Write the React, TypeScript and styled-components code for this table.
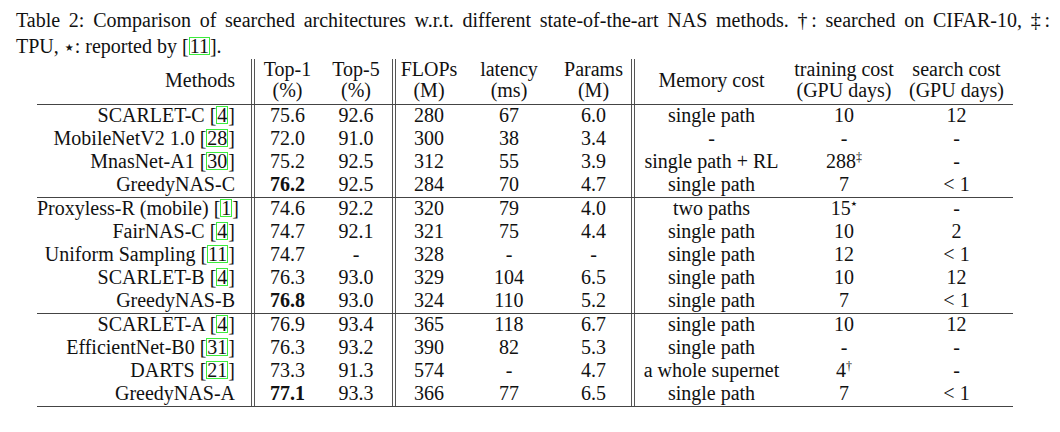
import React from "react";
import styled, { createGlobalStyle } from "styled-components";

type Row = {
  method: string;
  cite?: string;
  top1: string;
  bold?: boolean;
  top5: string;
  flops: string;
  latency: string;
  params: string;
  memory: string;
  train: string;
  mark?: string;
  search: string;
};

const groups: Row[][] = [
  [
    { method: "SCARLET-C", cite: "4", top1: "75.6", top5: "92.6", flops: "280", latency: "67", params: "6.0", memory: "single path", train: "10", search: "12" },
    { method: "MobileNetV2 1.0", cite: "28", top1: "72.0", top5: "91.0", flops: "300", latency: "38", params: "3.4", memory: "-", train: "-", search: "-" },
    { method: "MnasNet-A1", cite: "30", top1: "75.2", top5: "92.5", flops: "312", latency: "55", params: "3.9", memory: "single path + RL", train: "288", mark: "‡", search: "-" },
    { method: "GreedyNAS-C", top1: "76.2", bold: true, top5: "92.5", flops: "284", latency: "70", params: "4.7", memory: "single path", train: "7", search: "< 1" },
  ],
  [
    { method: "Proxyless-R (mobile)", cite: "1", top1: "74.6", top5: "92.2", flops: "320", latency: "79", params: "4.0", memory: "two paths", train: "15", mark: "★", search: "-" },
    { method: "FairNAS-C", cite: "4", top1: "74.7", top5: "92.1", flops: "321", latency: "75", params: "4.4", memory: "single path", train: "10", search: "2" },
    { method: "Uniform Sampling", cite: "11", top1: "74.7", top5: "-", flops: "328", latency: "-", params: "-", memory: "single path", train: "12", search: "< 1" },
    { method: "SCARLET-B", cite: "4", top1: "76.3", top5: "93.0", flops: "329", latency: "104", params: "6.5", memory: "single path", train: "10", search: "12" },
    { method: "GreedyNAS-B", top1: "76.8", bold: true, top5: "93.0", flops: "324", latency: "110", params: "5.2", memory: "single path", train: "7", search: "< 1" },
  ],
  [
    { method: "SCARLET-A", cite: "4", top1: "76.9", top5: "93.4", flops: "365", latency: "118", params: "6.7", memory: "single path", train: "10", search: "12" },
    { method: "EfficientNet-B0", cite: "31", top1: "76.3", top5: "93.2", flops: "390", latency: "82", params: "5.3", memory: "single path", train: "-", search: "-" },
    { method: "DARTS", cite: "21", top1: "73.3", top5: "91.3", flops: "574", latency: "-", params: "4.7", memory: "a whole supernet", train: "4", mark: "†", search: "-" },
    { method: "GreedyNAS-A", top1: "77.1", bold: true, top5: "93.3", flops: "366", latency: "77", params: "6.5", memory: "single path", train: "7", search: "< 1" },
  ],
];

// column widths include the double separator on the right
const widths = [218, 65, 76, 66, 94, 79, 153, 112, 113];

const GlobalStyle = createGlobalStyle`
  * { box-sizing: border-box; }
  body {
    margin: 0;
    background: #fff;
    color: #111;
    font-family: "Liberation Serif", "Times New Roman", serif;
  }
`;

const Page = styled.div`
  width: 1060px;
  padding-top: 7px;
`;

const Caption = styled.div`
  width: 1034px;
  margin-left: 16px;
  font-size: 20px;
  line-height: 26px;
`;

const CaptionLine = styled.div<{ $justify?: boolean }>`
  text-align: ${(p) => (p.$justify ? "justify" : "left")};
  text-align-last: ${(p) => (p.$justify ? "justify" : "left")};
`;

const Star = styled.span`
  font-family: "DejaVu Sans", sans-serif;
  font-size: 10px;
  line-height: 0;
  position: relative;
  top: -2px;
  margin: 0 1px;
`;

const Cite = styled.span`
  display: inline-block;
  line-height: 16px;
  border: 1.5px solid #3ced3c;
`;

const Table = styled.table`
  margin-left: 37px;
  width: 976px;
  table-layout: fixed;
  border-collapse: separate;
  border-spacing: 0;
  font-size: 20px;
`;

const HeadCell = styled.th<{ $sep?: boolean; $right?: boolean }>`
  font-weight: normal;
  line-height: 21px;
  padding: 0 ${(p) => (p.$right ? "16px" : "0")} 3px 0;
  vertical-align: middle;
  text-align: ${(p) => (p.$right ? "right" : "center")};
  border-right: ${(p) => (p.$sep ? "4px double #555" : "none")};
`;

const Cell = styled.td<{ $sep?: boolean; $right?: boolean; $bold?: boolean }>`
  line-height: 20px;
  padding: 0 ${(p) => (p.$right ? "16px" : "0")} 3px 0;
  white-space: nowrap;
  text-align: ${(p) => (p.$right ? "right" : "center")};
  font-weight: ${(p) => (p.$bold ? 700 : 400)};
  border-right: ${(p) => (p.$sep ? "4px double #555" : "none")};
`;

const RuleCell = styled.td`
  height: 1px;
  padding: 0;
  font-size: 0;
  line-height: 0;
  background: #444;
`;

const Sup = styled.sup<{ $star?: boolean }>`
  font-size: ${(p) => (p.$star ? "7px" : "12px")};
  font-family: ${(p) => (p.$star ? '"DejaVu Sans", sans-serif' : "inherit")};
  line-height: 0;
  vertical-align: ${(p) => (p.$star ? "9px" : "7px")};
`;

const Rule = () => (
  <tr>
    <RuleCell colSpan={9} />
  </tr>
);

const Head = ({ top, bottom, sep }: { top: string; bottom: string; sep?: boolean }) => (
  <HeadCell $sep={sep}>
    {top}
    <br />
    {bottom}
  </HeadCell>
);

const DataRow = ({ row }: { row: Row }) => (
  <tr>
    <Cell $right $sep>
      {row.method}
      {row.cite && (
        <>
          {" ["}
          <Cite>{row.cite}</Cite>]
        </>
      )}
    </Cell>
    <Cell $bold={row.bold}>{row.top1}</Cell>
    <Cell $sep>{row.top5}</Cell>
    <Cell>{row.flops}</Cell>
    <Cell>{row.latency}</Cell>
    <Cell $sep>{row.params}</Cell>
    <Cell>{row.memory}</Cell>
    <Cell>
      {row.train}
      {row.mark && <Sup $star={row.mark === "★"}>{row.mark}</Sup>}
    </Cell>
    <Cell>{row.search}</Cell>
  </tr>
);

const App = () => {
  return (
    <Page>
      <GlobalStyle />
      <Caption>
        <CaptionLine $justify>
          Table 2: Comparison of searched architectures w.r.t. different state-of-the-art NAS methods. †: searched on
          CIFAR-10, ‡:
        </CaptionLine>
        <CaptionLine>
          TPU, <Star>★</Star>: reported by [<Cite>11</Cite>].
        </CaptionLine>
      </Caption>
      <Table>
        <colgroup>
          {widths.map((w, i) => (
            <col key={i} style={{ width: w }} />
          ))}
        </colgroup>
        <thead>
          <tr>
            <HeadCell $right $sep>
              Methods
            </HeadCell>
            <Head top="Top-1" bottom="(%)" />
            <Head top="Top-5" bottom="(%)" sep />
            <Head top="FLOPs" bottom="(M)" />
            <Head top="latency" bottom="(ms)" />
            <Head top="Params" bottom="(M)" sep />
            <HeadCell>Memory cost</HeadCell>
            <Head top="training cost" bottom="(GPU days)" />
            <Head top="search cost" bottom="(GPU days)" />
          </tr>
        </thead>
        <tbody>
          <Rule />
          {groups.map((g, gi) => (
            <React.Fragment key={gi}>
              {gi > 0 && <Rule />}
              {g.map((r) => (
                <DataRow key={r.method} row={r} />
              ))}
            </React.Fragment>
          ))}
          <Rule />
        </tbody>
      </Table>
    </Page>
  );
};

export default App;
